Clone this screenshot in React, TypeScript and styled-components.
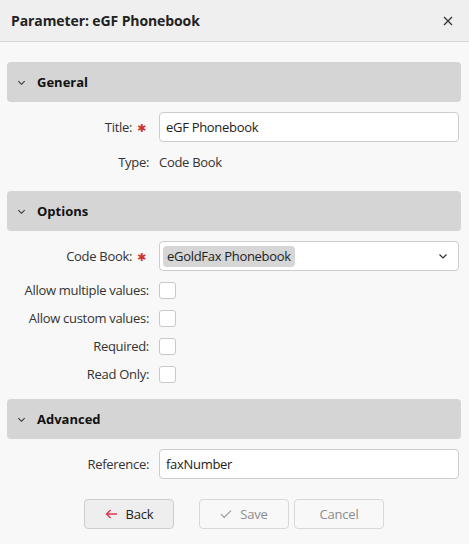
import styled, { createGlobalStyle } from "styled-components";

const GlobalStyle = createGlobalStyle`
  html, body {
    margin: 0;
    padding: 0;
    background: #f8f8f8;
  }
  body {
    font-family: "Open Sans", "Noto Sans", sans-serif;
    font-size: 13px;
    color: #222;
  }
  * {
    box-sizing: border-box;
  }
`;

const Dialog = styled.div`
  width: 469px;
  min-height: 544px;
  background: #f8f8f8;
  display: flex;
  flex-direction: column;
`;

const Header = styled.div`
  height: 42px;
  padding: 0 14px 0 11px;
  display: flex;
  align-items: center;
  justify-content: space-between;
  background: #efefef;
  border-bottom: 1px solid #d6d6d6;
`;

const HeaderTitle = styled.span`
  font-size: 14px;
  font-weight: 700;
  color: #222;
  letter-spacing: -0.1px;
`;

const CloseButton = styled.button`
  border: none;
  background: transparent;
  padding: 0;
  width: 14px;
  height: 14px;
  display: flex;
  align-items: center;
  justify-content: center;
  cursor: pointer;
`;

const Body = styled.div`
  padding: 20px 8px 0 7px;
  display: flex;
  flex-direction: column;
`;

const SectionHeader = styled.div`
  height: 40px;
  border-radius: 4px;
  background: #d5d5d5;
  display: flex;
  align-items: center;
  gap: 11px;
  padding-left: 10px;
  font-weight: 700;
  font-size: 13px;
  color: #111;
`;

const SectionContent = styled.div<{ $bottom?: number }>`
  padding: 10px 2px ${(p) => p.$bottom ?? 14}px 0;
  display: flex;
  flex-direction: column;
  gap: 5px;
  letter-spacing: -0.3px;
`;

const Row = styled.div<{ $height?: number }>`
  display: grid;
  grid-template-columns: 142px 1fr;
  column-gap: 10px;
  align-items: center;
  min-height: ${(p) => p.$height ?? 30}px;
`;

const CheckList = styled.div`
  display: flex;
  flex-direction: column;
`;

const Label = styled.label`
  text-align: right;
  color: #333;
  white-space: nowrap;
`;

const Required = styled.span`
  color: #d0342c;
  margin-left: 5px;
  margin-right: 3px;
  font-size: 11px;
  font-family: "DejaVu Sans", sans-serif;
`;

const TextInput = styled.input`
  height: 30px;
  width: 100%;
  border: 1px solid #cccccc;
  border-radius: 4px;
  background: #fff;
  padding: 0 6px;
  font: inherit;
  letter-spacing: inherit;
  color: #222;
  outline: none;
`;

const Value = styled.span`
  color: #333;
`;

const SelectBox = styled.div`
  height: 30px;
  border: 1px solid #cccccc;
  border-radius: 4px;
  background: #fff;
  display: flex;
  align-items: center;
  justify-content: space-between;
  padding: 0 10px 0 3px;
`;

const Chip = styled.span`
  background: #d6d6d6;
  border-radius: 4px;
  height: 21px;
  line-height: 21px;
  padding: 0 4px;
  color: #222;
`;

const Checkbox = styled.span`
  width: 17px;
  height: 17px;
  border: 1px solid #c8c8c8;
  border-radius: 3px;
  background: #fff;
  display: block;
`;

const Footer = styled.div`
  margin-top: 20px;
  display: flex;
  justify-content: center;
  gap: 5px;
  letter-spacing: -0.2px;
`;

const Button = styled.button<{ $primary?: boolean; $disabled?: boolean }>`
  width: 90px;
  height: 30px;
  border-radius: 4px;
  border: 1px solid ${(p) => (p.$primary ? "#cdcdcd" : "#d8d8d8")};
  background: ${(p) => (p.$primary ? "#eeeeee" : "transparent")};
  color: ${(p) => (p.$primary ? "#222" : "#8c8c8c")};
  font: inherit;
  letter-spacing: inherit;
  display: inline-flex;
  align-items: center;
  justify-content: center;
  gap: 8px;
  cursor: ${(p) => (p.$disabled ? "default" : "pointer")};
  &:first-child {
    margin-right: 20px;
  }
`;

const Chevron = ({ size = 9, color = "#333" }: { size?: number; color?: string }) => (
  <svg width={size} height={size} viewBox="0 0 10 10">
    <path d="M1.5 3.5 L5 7 L8.5 3.5" fill="none" stroke={color} strokeWidth="1.2" />
  </svg>
);

const fields = ["Allow multiple values:", "Allow custom values:", "Required:", "Read Only:"];

export default function App() {
  return (
    <Dialog>
      <GlobalStyle />
      <Header>
        <HeaderTitle>Parameter: eGF Phonebook</HeaderTitle>
        <CloseButton>
          <svg width="10" height="10" viewBox="0 0 10 10">
            <path d="M1 1 L9 9 M9 1 L1 9" stroke="#333" strokeWidth="1.3" />
          </svg>
        </CloseButton>
      </Header>
      <Body>
        <SectionHeader>
          <Chevron />
          General
        </SectionHeader>
        <SectionContent>
          <Row>
            <Label>
              Title:<Required>✱</Required>
            </Label>
            <TextInput defaultValue="eGF Phonebook" />
          </Row>
          <Row>
            <Label>Type:</Label>
            <Value>Code Book</Value>
          </Row>
        </SectionContent>

        <SectionHeader>
          <Chevron />
          Options
        </SectionHeader>
        <SectionContent $bottom={11}>
          <Row>
            <Label>
              Code Book:<Required>✱</Required>
            </Label>
            <SelectBox>
              <Chip>eGoldFax Phonebook</Chip>
              <Chevron size={10} />
            </SelectBox>
          </Row>
          <CheckList>
            {fields.map((f) => (
              <Row key={f} $height={28}>
                <Label>{f}</Label>
                <Checkbox />
              </Row>
            ))}
          </CheckList>
        </SectionContent>

        <SectionHeader>
          <Chevron />
          Advanced
        </SectionHeader>
        <SectionContent $bottom={0}>
          <Row>
            <Label>Reference:</Label>
            <TextInput defaultValue="faxNumber" />
          </Row>
        </SectionContent>

        <Footer>
          <Button $primary>
            <svg width="13" height="10" viewBox="0 0 13 10">
              <path d="M12 5 H1.5 M5.5 1 L1.5 5 L5.5 9" fill="none" stroke="#e2364f" strokeWidth="1.4" />
            </svg>
            Back
          </Button>
          <Button $disabled>
            <svg width="12" height="10" viewBox="0 0 12 10">
              <path d="M1 5.2 L4.2 8.4 L11 1.6" fill="none" stroke="#9a9a9a" strokeWidth="1.2" />
            </svg>
            Save
          </Button>
          <Button $disabled>Cancel</Button>
        </Footer>
      </Body>
    </Dialog>
  );
}
